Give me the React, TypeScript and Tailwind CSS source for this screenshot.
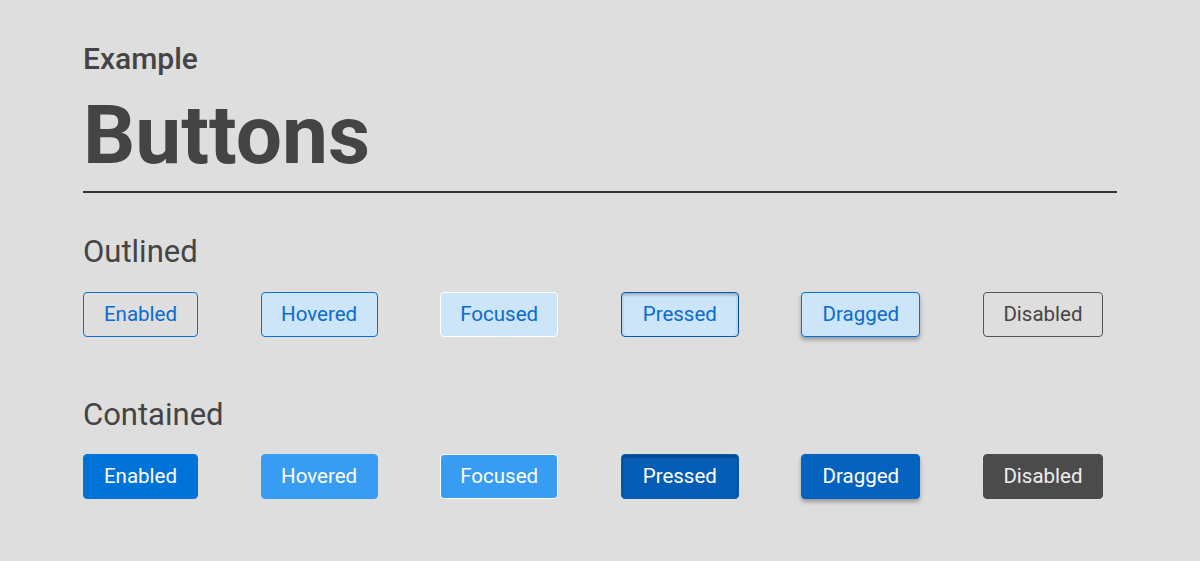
const widths = ["w-[115px]", "w-[117px]", "w-[118px]", "w-[118px]", "w-[119px]", "w-[120px]"];

const outlined = [
  { label: "Enabled", cls: "border-[#0b6fd6] text-[#0b6bd0]" },
  { label: "Hovered", cls: "border-[#0b6fd6] bg-[#cce5f8] text-[#0b6bd0]" },
  { label: "Focused", cls: "border-white bg-[#cce5f8] text-[#0b6bd0]" },
  {
    label: "Pressed",
    cls: "border-[#0556ad] bg-[#cce5f8] text-[#0b6bd0] shadow-[inset_0_2px_3px_rgba(0,0,0,0.25)]",
  },
  {
    label: "Dragged",
    cls: "border-[#0b6fd6] bg-[#cce5f8] text-[#0b6bd0] shadow-[0_3px_4px_rgba(0,0,0,0.3)]",
  },
  { label: "Disabled", cls: "border-[#555555] text-[#444444]" },
];

const contained = [
  { label: "Enabled", cls: "border-[#0073d9] bg-[#0073d9] text-white" },
  { label: "Hovered", cls: "border-[#389cf2] bg-[#389cf2] text-white" },
  { label: "Focused", cls: "border-white bg-[#389cf2] text-white" },
  {
    label: "Pressed",
    cls: "border-[#055db6] bg-[#055db6] text-white shadow-[inset_0_2px_3px_rgba(0,0,0,0.3)]",
  },
  {
    label: "Dragged",
    cls: "border-[#0562be] bg-[#0562be] text-white shadow-[0_3px_4px_rgba(0,0,0,0.3)]",
  },
  { label: "Disabled", cls: "border-[#4b4b4b] bg-[#4b4b4b] text-[#eeeeee]" },
];

function ButtonRow({ items }: { items: { label: string; cls: string }[] }) {
  return (
    <div className="flex gap-[62.6px]">
      {items.map((b, i) => (
        <button
          key={b.label}
          className={`h-[45px] ${widths[i]} rounded-[4px] border text-center text-[20.5px] leading-none ${b.cls}`}
        >
          {b.label}
        </button>
      ))}
    </div>
  );
}

export default function App() {
  return (
    <div className="h-[561px] w-[1200px] overflow-hidden bg-[#dedede] font-['Roboto',sans-serif] text-[#444444]">
      <div className="px-[83px] pt-[44px]">
        <div className="text-[30px] font-medium leading-none">Example</div>
        <h1 className="mt-[20px] text-[82px] font-bold leading-none">Buttons</h1>
        <div className="mt-[15px] h-[2px] bg-[#333333]" />

        <h2 className="mt-[43px] text-[31px] leading-none">Outlined</h2>
        <div className="mt-[25px]">
          <ButtonRow items={outlined} />
        </div>

        <h2 className="mt-[62px] text-[31px] leading-none">Contained</h2>
        <div className="mt-[24px]">
          <ButtonRow items={contained} />
        </div>
      </div>
    </div>
  );
}
